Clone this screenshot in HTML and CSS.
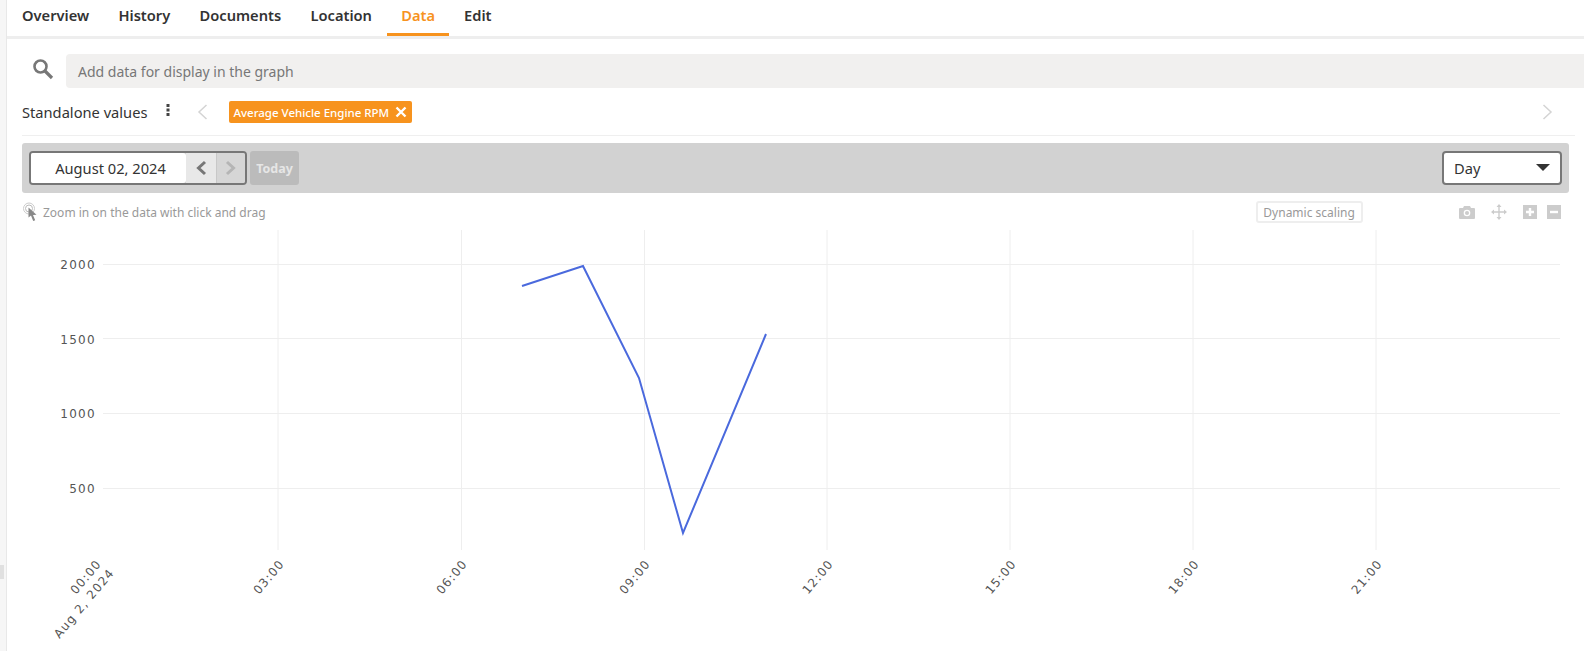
FILE: index.html
```html
<!DOCTYPE html>
<html lang="en">
<head>
<meta charset="utf-8">
<title>Data</title>
<link rel="stylesheet" href="styles.css">
</head>
<body>
<div class="rail"><span class="grip"></span></div>
<main class="main">
  <nav class="tabs">
    <a class="tab">Overview</a>
    <a class="tab">History</a>
    <a class="tab">Documents</a>
    <a class="tab">Location</a>
    <a class="tab active">Data</a>
    <a class="tab">Edit</a>
  </nav>
  <div class="search-row">
    <svg class="search-icon" width="22" height="22" viewBox="0 0 22 22"><circle cx="8.5" cy="8.5" r="6" fill="none" stroke="#777" stroke-width="2.6"/><path d="M13 13l7 7" stroke="#777" stroke-width="3.2" fill="none"/></svg>
    <div class="search-input">Add data for display in the graph</div>
  </div>
  <div class="values-row">
    <span class="values-label">Standalone values</span>
    <svg class="kebab" width="4" height="12" viewBox="0 0 4 12"><rect x="0.5" y="0" width="3" height="3" fill="#444"/><rect x="0.5" y="4.5" width="3" height="3" fill="#444"/><rect x="0.5" y="9" width="3" height="3" fill="#444"/></svg>
    <svg class="chev-left" width="11" height="16" viewBox="0 0 11 16"><path d="M9.5 1L2 8l7.5 7" fill="none" stroke="#d4d4d4" stroke-width="1.5"/></svg>
    <span class="chip">Average Vehicle Engine RPM
      <svg width="12" height="12" viewBox="0 0 12 12"><path d="M1.5 1.5l9 9M10.5 1.5l-9 9" stroke="#fff" stroke-width="2.4"/></svg>
    </span>
    <svg class="chev-right" width="11" height="16" viewBox="0 0 11 16"><path d="M1.5 1L9 8l-7.5 7" fill="none" stroke="#d4d4d4" stroke-width="1.5"/></svg>
  </div>
  <div class="toolbar">
    <div class="date-group">
      <div class="date-value">August 02, 2024</div>
      <div class="date-btn prev"><svg width="12" height="16" viewBox="0 0 12 16"><path d="M10 2L3.5 8l6.500 6" fill="none" stroke="#777" stroke-width="3"/></svg></div>
      <div class="date-btn next"><svg width="12" height="16" viewBox="0 0 12 16"><path d="M2 2l6.500 6L2 14" fill="none" stroke="#b5b5b5" stroke-width="3"/></svg></div>
    </div>
    <div class="today">Today</div>
    <div class="period">Day<svg width="14" height="7" viewBox="0 0 14 7"><path d="M0 0h14L7 7z" fill="#333"/></svg></div>
  </div>
  <div class="hint-row">
    <svg class="hint-icon" width="16" height="20" viewBox="0 0 16 20"><circle cx="6" cy="6.500" r="5.500" fill="none" stroke="#ccc" stroke-width="1"/><circle cx="6" cy="6.500" r="3.500" fill="none" stroke="#bbb" stroke-width="1"/><path d="M5.500 5.500l0 10 2.500-2 2.200 5.500 2-.8-2.200-5.200 3.500-.2z" fill="#888"/></svg>
    <span class="hint-text">Zoom in on the data with click and drag</span>
    <span class="scaling">Dynamic scaling</span>
    <div class="chart-tools">
      <svg width="16" height="13" viewBox="0 0 16 13"><path d="M5 0h6l1 2h3a1 1 0 0 1 1 1v9a1 1 0 0 1-1 1H1a1 1 0 0 1-1-1V3a1 1 0 0 1 1-1h3z" fill="#ccc"/><circle cx="8" cy="7" r="3.300" fill="#fff"/><circle cx="8" cy="7" r="2" fill="#ccc"/></svg>
      <svg class="tool-move" width="16" height="16" viewBox="0 0 16 16"><path d="M8 1v14M1 8h14" stroke="#ccc" stroke-width="1.400"/><path d="M8 0l2.500 3h-5zM8 16l2.500-3h-5zM0 8l3-2.500v5zM16 8l-3-2.500v5z" fill="#ccc"/></svg>
      <svg class="tool-plus" width="14" height="14" viewBox="0 0 14 14"><rect width="14" height="14" fill="#ccc"/><path d="M7 3v8M3 7h8" stroke="#fff" stroke-width="2.400"/></svg>
      <svg class="tool-minus" width="14" height="14" viewBox="0 0 14 14"><rect width="14" height="14" fill="#ccc"/><path d="M3 7h8" stroke="#fff" stroke-width="2.400"/></svg>
    </div>
  </div>
  <svg class="chart" width="1578" height="421" viewBox="0 230 1578 421">
    <g class="grid">
      <path d="M271 230V550M454.500 230V550M637.500 230V550M820 230V550M1003 230V550M1186 230V550M1369 230V550"/>
      <path d="M96 264.500H1553M96 338.500H1553M96 413.500H1553M96 488.500H1553"/>
    </g>
    <g class="ylabels">
      <text x="89" y="269">2000</text>
      <text x="89" y="344">1500</text>
      <text x="89" y="418">1000</text>
      <text x="89" y="493">500</text>
    </g>
    <polyline class="series" points="515,286 576,266 632,378 676,533 759,334"/>
    <g class="xlabels">
      <text transform="translate(95,564) rotate(-50)">00:00</text>
      <text transform="translate(108,573) rotate(-50)">Aug 2, 2024</text>
      <text transform="translate(278,564) rotate(-50)">03:00</text>
      <text transform="translate(461,564) rotate(-50)">06:00</text>
      <text transform="translate(644,564) rotate(-50)">09:00</text>
      <text transform="translate(827,564) rotate(-50)">12:00</text>
      <text transform="translate(1010,564) rotate(-50)">15:00</text>
      <text transform="translate(1193,564) rotate(-50)">18:00</text>
      <text transform="translate(1376,564) rotate(-50)">21:00</text>
    </g>
  </svg>
</main>
</body>
</html>
```
FILE: styles.css
```css
* { box-sizing: border-box; }
html, body { margin: 0; padding: 0; height: 651px; overflow: hidden; background: #fff; }
body { display: flex; font-family: "Noto Sans", "Open Sans", sans-serif; font-size: 14.67px; color: #333; }
.rail { width: 7px; flex: none; background: #f6f6f6; border-right: 1px solid #e8e8e8; display: flex; align-items: flex-end; padding-bottom: 72px; }
.grip { width: 4px; height: 14px; background: #e0e0e0; }
.main { flex: 1; min-width: 0; display: flex; flex-direction: column; }
.tabs { display: flex; height: 39px; padding-left: 7px; border-bottom: 3px solid #eeeeee; }
.tab { height: 36px; padding: 5px 8px 0; margin-right: 13.300px; font-weight: 600; line-height: 20px; color: #333; }
.tab.active { color: #f7931e; border-bottom: 3px solid #f7931e; padding: 5px 14px 0; margin-left: -6px; margin-right: 7px; }
.search-row { display: flex; align-items: center; margin-top: 15px; height: 34px; padding-left: 25px; }
.search-icon { flex: none; margin-right: 12px; margin-top: -4px; }
.search-input { flex: 1; height: 34px; line-height: 36px; padding-left: 12px; background: #f1f0ef; border-radius: 4px 0 0 4px; color: #777; font-size: 14px; }
.values-row { display: flex; align-items: center; margin: 13px 9px 0 15px; height: 35px; padding-bottom: 11px; border-bottom: 1px solid #efefef; }
.values-label { color: #333; }
.kebab { margin-left: 19px; margin-top: -4px; }
.chev-left { margin-left: 27px; }
.chip { display: flex; align-items: center; gap: 6px; height: 22px; margin-left: 21px; padding: 0 5px 0 4px; background: #f7931e; color: #fff; border-radius: 2px; font-size: 11.500px; font-weight: 500; }
.chev-right { margin-left: auto; margin-right: 22px; }
.toolbar { display: flex; align-items: center; height: 51px; margin: 7px 15px 0 15px; padding: 0 7px; background: #d2d2d2; border-radius: 3px; }
.date-group { display: flex; width: 218px; height: 34px; border: 2px solid #777; border-radius: 4px; overflow: hidden; }
.date-value { width: 155px; padding-left: 4px; background: #fff; text-align: center; line-height: 30px; border-radius: 0 3px 3px 0; color: #333; }
.date-btn { width: 30px; display: flex; align-items: center; justify-content: center; }
.date-btn.prev { background: #e8e8e8; }
.date-btn.next { background: #d6d6d6; flex: 1; border-left: 1px solid #c8c8c8; }
.today { width: 49px; height: 34px; margin-left: 3px; background: #bbbbbb; border-radius: 3px; color: #e6e6e6; font-size: 12.500px; font-weight: 700; text-align: center; line-height: 36px; }
.period { display: flex; align-items: center; justify-content: space-between; width: 120px; height: 34px; margin-left: auto; padding: 0 10px; background: #fff; border: 2px solid #777; border-radius: 4px; color: #333; }
.hint-row { display: flex; align-items: center; height: 22px; margin-top: 8px; padding-left: 16px; }
.hint-icon { flex: none; }
.hint-text { margin-left: 4px; font-size: 12px; color: #999; }
.scaling { height: 22px; width: 107px; margin-left: 990px; text-align: center; line-height: 19px; border: 2px solid #eeeeee; border-radius: 3px; font-size: 12px; color: #999; }
.chart-tools { display: flex; align-items: center; padding-left: 96px; }
.tool-move { margin-left: 16px; }
.tool-plus { margin-left: 16px; }
.tool-minus { margin-left: 10px; }
.chart { display: block; flex: none; margin-top: 7px; }
.grid path { fill: none; stroke: #eeeeee; stroke-width: 1; }
.series { fill: none; stroke: #4a69dd; stroke-width: 2; }
.ylabels text { font-family: "DejaVu Sans", sans-serif; font-size: 12px; letter-spacing: 1.300px; fill: #555; text-anchor: end; }
.xlabels text { font-family: "DejaVu Sans", sans-serif; font-size: 12px; letter-spacing: 1.200px; fill: #555; text-anchor: end; }
```
